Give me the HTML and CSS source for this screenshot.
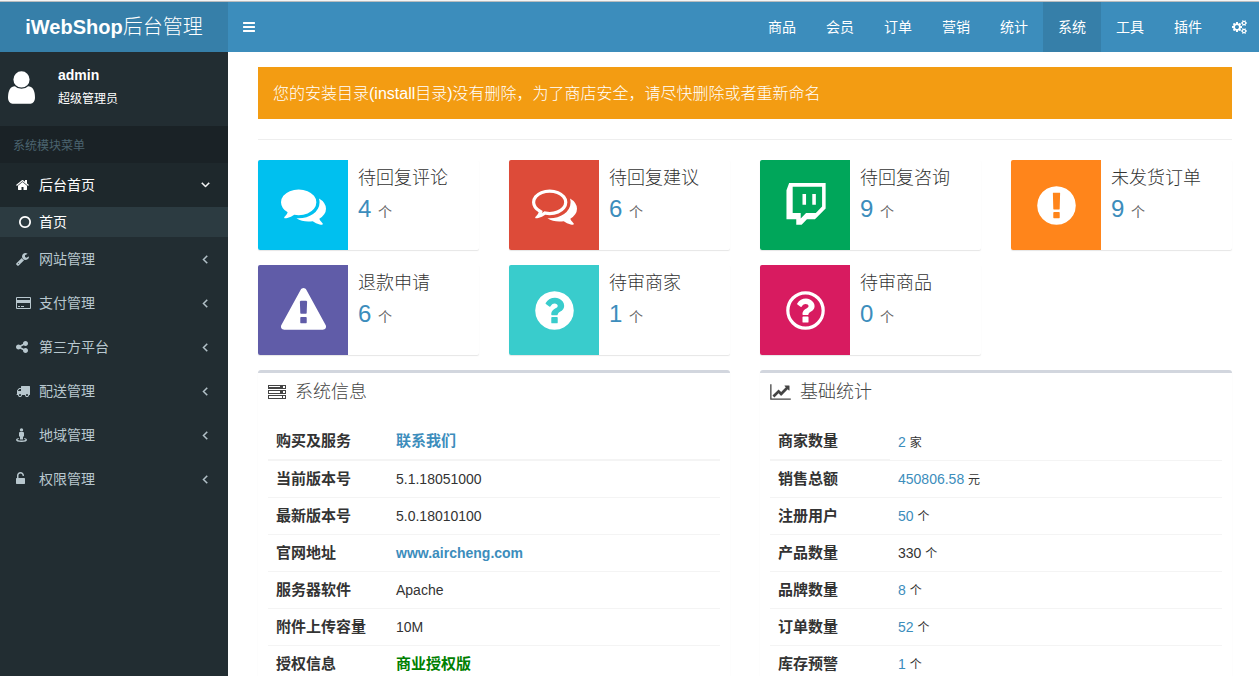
FILE: index.html
```html
<!DOCTYPE html>
<html lang="zh-CN">
<head>
<meta charset="utf-8">
<title>iWebShop后台管理</title>
<link rel="stylesheet" href="styles.css">
</head>
<body>
<svg class="sprite" aria-hidden="true">
  <symbol id="bars" viewBox="0 0 1792 1792"><path d="M1664 1344v128q0 26-19 45t-45 19h-1408q-26 0-45-19t-19-45v-128q0-26 19-45t45-19h1408q26 0 45 19t19 45zm0-512v128q0 26-19 45t-45 19h-1408q-26 0-45-19t-19-45v-128q0-26 19-45t45-19h1408q26 0 45 19t19 45zm0-512v128q0 26-19 45t-45 19h-1408q-26 0-45-19t-19-45v-128q0-26 19-45t45-19h1408q26 0 45 19t19 45z"/></symbol>
  <symbol id="user" viewBox="256 128 1280 1536"><path d="M1536 1399q0 109-62.5 187t-150.5 78h-854q-88 0-150.5-78t-62.5-187q0-85 8.5-160.5t31.5-152 58.5-131 94-89 134.5-34.5q131 128 313 128t313-128q76 0 134.5 34.5t94 89 58.5 131 31.5 152 8.5 160.5zm-256-887q0 159-112.5 271.5t-271.5 112.5-271.5-112.5-112.5-271.5 112.5-271.5 271.5-112.5 271.5 112.5 112.5 271.5z"/></symbol>
  <symbol id="home" viewBox="64 0 1792 1792"><path d="M1472 992v480q0 26-19 45t-45 19h-384v-384h-256v384h-384q-26 0-45-19t-19-45v-480q0-1 .5-3t.5-3l575-474 575 474q1 2 1 6zm223-69l-62 74q-8 9-21 11h-3q-13 0-21-7l-692-577-692 577q-12 8-24 7-13-2-21-11l-62-74q-8-10-7-23.5t11-21.5l719-599q32-26 76-26t76 26l244 204v-195q0-14 9-23t23-9h192q14 0 23 9t9 23v408l219 182q10 8 11 21.5t-7 23.5z"/></symbol>
  <symbol id="ring" viewBox="0 0 1792 1792"><path d="M896 352q-148 0-273 73t-198 198-73 273 73 273 198 198 273 73 273-73 198-198 73-273-73-273-198-198-273-73zm768 544q0 209-103 385.5t-279.5 279.5-385.5 103-385.5-103-279.5-279.5-103-385.5 103-385.5 279.5-279.5 385.5-103 385.5 103 279.5 279.5 103 385.5z"/></symbol>
  <symbol id="wrench" viewBox="64 0 1792 1792"><path d="M448 1472q0-26-19-45t-45-19-45 19-19 45 19 45 45 19 45-19 19-45zm644-420l-682 682q-37 37-90 37-52 0-91-37l-106-108q-38-36-38-90 0-53 38-91l681-681q39 98 114.5 173.5t173.5 114.5zm634-435q0 39-23 106-47 134-164.5 217.5t-258.5 83.5q-185 0-316.5-131.5t-131.5-316.5 131.5-316.5 316.5-131.5q58 0 121.5 16.5t107.5 46.5q16 11 16 28t-16 28l-293 169v224l193 107q5-3 79-48.5t135.5-81 70.5-35.5q15 0 23.5 10t8.5 25z"/></symbol>
  <symbol id="card" viewBox="0 0 15 14"><path fill-rule="evenodd" d="M1 1h13q1 0 1 1v10q0 1-1 1h-13q-1 0-1-1v-10q0-1 1-1zM1 2v2h13v-2zM1 7v5h13v-5zM2 10h2v1h-2zM5 10h3v1h-3z"/></symbol>
  <symbol id="share" viewBox="128 0 1792 1792"><path d="M1344 1024q133 0 226.5 93.5t93.5 226.5-93.5 226.5-226.5 93.5-226.5-93.5-93.5-226.5q0-12 2-34l-360-180q-92 86-218 86-133 0-226.5-93.5t-93.5-226.5 93.5-226.5 226.5-93.5q126 0 218 86l360-180q-2-22-2-34 0-133 93.5-226.5t226.5-93.5 226.5 93.5 93.5 226.5-93.5 226.5-226.5 93.5q-126 0-218-86l-360 180q2 22 2 34t-2 34l360 180q92-86 218-86z"/></symbol>
  <symbol id="truck" viewBox="0 0 1792 1792"><path d="M640 1408q0-52-38-90t-90-38-90 38-38 90 38 90 90 38 90-38 38-90zm-384-512h384v-256h-158q-13 0-22 9l-195 195q-9 9-9 22v30zm1280 512q0-52-38-90t-90-38-90 38-38 90 38 90 90 38 90-38 38-90zm256-1088v1024q0 15-4 26.5t-13.5 18.5-16.5 11.5-23.5 6-22.5 2-25.5 0-22.5-.5q0 106-75 181t-181 75-181-75-75-181h-384q0 106-75 181t-181 75-181-75-75-181h-64q-3 0-22.5.5t-25.5 0-22.5-2-23.5-6-16.5-11.5-13.5-18.5-4-26.5q0-26 19-45t45-19v-320q0-8-.5-35t0-38 2.5-34.5 6.5-37 14-30.5 22.5-30l198-198q19-19 50.5-32t58.5-13h160v-192q0-26 19-45t45-19h1024q26 0 45 19t19 45z"/></symbol>
  <symbol id="street" viewBox="0 0 14 14"><circle cx="5.5" cy="1.9" r="1.7"/><path d="M3 5q0-1 1-1h3q1 0 1 1v3.500h-1v3h-3v-3h-1zM2.600 10l.3 1q-1.400.3-1.400.7 0 .8 4 .8t4-.8q0-.4-1.400-.7l.3-1q2.600.5 2.600 1.700 0 2.200-5.500 2.200t-5.500-2.200q0-1.200 2.600-1.700z"/></symbol>
  <symbol id="unlock" viewBox="320 0 1792 1792"><path d="M1376 768q40 0 68 28t28 68v576q0 40-28 68t-68 28h-960q-40 0-68-28t-28-68v-576q0-40 28-68t68-28h32v-320q0-185 131.500-316.500t316.500-131.500 316.500 131.500 131.500 316.500q0 26-19 45t-45 19h-64q-26 0-45-19t-19-45q0-106-75-181t-181-75-181 75-75 181v320h736z"/></symbol>
  <symbol id="angle" viewBox="0 0 1792 1792"><path stroke="currentColor" stroke-width="60" d="M1203 544q0 13-10 23l-393 393 393 393q10 10 10 23t-10 23l-50 50q-10 10-23 10t-23-10l-466-466q-10-10-10-23t10-23l466-466q10-10 23-10t23 10l50 50q10 10 10 23z"/></symbol>
  <symbol id="cogs" viewBox="-64 0 1920 1792"><path d="M832 896q0-106-75-181t-181-75-181 75-75 181 75 181 181 75 181-75 75-181zm768 512q0-52-38-90t-90-38-90 38-38 90q0 53 37.500 90.500t90.500 37.500 90.500-37.500 37.500-90.500zm0-1024q0-52-38-90t-90-38-90 38-38 90q0 53 37.500 90.500t90.500 37.500 90.500-37.500 37.500-90.500zm-384 421v185q0 10-7 19.500t-16 10.500l-155 24q-11 35-32 76 34 48 90 115 7 11 7 20 0 12-7 19-23 30-82.500 89.500t-78.500 59.500q-11 0-21-7l-115-90q-37 19-77 31-11 108-23 155-7 24-30 24h-186q-11 0-20-7.500t-10-17.500l-23-153q-34-10-75-31l-118 89q-7 7-20 7-11 0-21-8-144-133-144-160 0-9 7-19 10-14 41-53t47-61q-23-44-35-82l-152-24q-10-1-17-9.500t-7-19.500v-185q0-10 7-19.500t16-10.500l155-24q11-35 32-76-34-48-90-115-7-11-7-20 0-12 7-20 22-30 82-89t79-59q11 0 21 7l115 90q34-18 77-32 11-108 23-154 7-24 30-24h186q11 0 20 7.500t10 17.500l23 153q34 10 75 31l118-89q8-7 20-7 11 0 21 8 144 133 144 160 0 8-7 19-12 16-42 54t-45 60q23 48 34 82l152 23q10 2 17 10.500t7 19.500zm640 533v140q0 16-149 31-12 27-30 52 51 113 51 138 0 4-4 7-122 71-124 71-8 0-46-47t-52-68q-20 2-30 2t-30-2q-14 21-52 68t-46 47q-2 0-124-71-4-3-4-7 0-25 51-138-18-25-30-52-149-15-149-31v-140q0-16 149-31 13-29 30-52-51-113-51-138 0-4 4-7 4-2 35-20t59-34 30-16q8 0 46 46.500t52 67.500q20-2 30-2t30 2q51-71 92-112l6-2q4 0 124 70 4 3 4 7 0 25-51 138 17 23 30 52 149 15 149 31zm0-1024v140q0 16-149 31-12 27-30 52 51 113 51 138 0 4-4 7-122 71-124 71-8 0-46-47t-52-68q-20 2-30 2t-30-2q-14 21-52 68t-46 47q-2 0-124-71-4-3-4-7 0-25 51-138-18-25-30-52-149-15-149-31v-140q0-16 149-31 13-29 30-52-51-113-51-138 0-4 4-7 4-2 35-20t59-34 30-16q8 0 46 46.500t52 67.500q20-2 30-2t30 2q51-71 92-112l6-2q4 0 124 70 4 3 4 7 0 25-51 138 17 23 30 52 149 15 149 31z"/></symbol>
  <symbol id="comments" viewBox="0 0 1792 1792"><path d="M1408 768q0 139-94 257t-256.500 186.500-353.500 68.500q-86 0-176-16-124 88-278 128-36 9-86 16h-3q-11 0-20.500-8t-11.500-21q-1-3-1-6.500t.5-6.500 2-6l2.500-5 3.500-5.500 4-5 4.500-5 4-4.500q5-6 23-25t26-29.500 22.500-29 25-38.500 20.500-44q-124-72-195-177t-71-224q0-139 94-257t256.500-186.500 353.500-68.500 353.500 68.500 256.500 186.500 94 257zm384 256q0 120-71 224.500t-195 176.500q10 24 20.500 44t25 38.500 22.500 29 26 29.500 23 25q1 1 4 4.500t4.500 5 4 5 3.500 5.500l2.500 5 2 6 .5 6.500-1 6.500q-3 14-13 22t-22 7q-50-7-86-16-154-40-278-128-90 16-176 16-271 0-472-132 58 4 88 4 161 0 309-45t264-129q125-92 192-212t67-254q0-77-23-152 129 71 204 178t75 230z"/></symbol>
  <symbol id="comments-o" viewBox="0 0 1792 1792"><path fill-rule="evenodd" d="M704 384q-153 0-286 52t-211.500 141-78.500 191q0 82 53 158t149 132l97 56-35 84q34-20 62-39l44-31 53 10q78 14 153 14 153 0 286-52t211.500-141 78.500-191-78.500-191-211.500-141-286-52zM1408 768q0 139-94 257t-256.500 186.500-353.500 68.500q-86 0-176-16-124 88-278 128-36 9-86 16h-3q-11 0-20.500-8t-11.500-21q-1-3-1-6.500t.5-6.500 2-6l2.500-5 3.500-5.500 4-5 4.500-5 4-4.500q5-6 23-25t26-29.500 22.500-29 25-38.500 20.500-44q-124-72-195-177t-71-224q0-139 94-257t256.500-186.500 353.500-68.500 353.500 68.500 256.500 186.500 94 257zm384 256q0 120-71 224.500t-195 176.500q10 24 20.500 44t25 38.500 22.500 29 26 29.500 23 25q1 1 4 4.500t4.500 5 4 5 3.500 5.500l2.500 5 2 6 .5 6.500-1 6.500q-3 14-13 22t-22 7q-50-7-86-16-154-40-278-128-90 16-176 16-271 0-472-132 58 4 88 4 161 0 309-45t264-129q125-92 192-212t67-254q0-77-23-152 129 71 204 178t75 230z"/></symbol>
  <symbol id="twitch" viewBox="0 0 1792 1792"><path transform="translate(40 0) scale(.98 1)" d="M896 434v434h-145v-434h145zm398 0v434h-145v-434h145zm0 760l253-254v-795h-1194v1049h326v217l217-217h398zm398-1194v1013l-434 434h-326l-217 217h-217v-217h-398v-1158l109-289h1483z"/></symbol>
  <symbol id="exclaim" viewBox="0 0 1792 1792"><path d="M896 128q209 0 385.500 103t279.500 279.500 103 385.500-103 385.500-279.500 279.500-385.500 103-385.500-103-279.500-279.500-103-385.500 103-385.500 279.500-279.500 385.500-103zm128 1247v-190q0-14-9-23.500t-22-9.500h-192q-13 0-23 10t-10 23v190q0 13 10 23t23 10h192q13 0 22-9.500t9-23.500zm-2-344l18-621q0-12-10-18-10-8-24-8h-220q-14 0-24 8-10 6-10 18l17 621q0 10 10 17.500t24 7.500h185q14 0 23.500-7.500t10.500-17.500z"/></symbol>
  <symbol id="warning" viewBox="0 0 1792 1792"><path d="M1024 1375v-190q0-14-9.500-23.500t-22.500-9.500h-192q-13 0-22.500 9.500t-9.500 23.500v190q0 14 9.500 23.500t22.500 9.500h192q13 0 22.500-9.500t9.500-23.500zm-2-374l18-459q0-12-10-19-13-11-24-11h-220q-11 0-24 11-10 7-10 21l17 457q0 10 10 16.500t24 6.500h185q14 0 23.500-6.500t10.500-16.500zm-14-934l768 1408q35 63-2 126-17 29-46.500 46t-63.500 17h-1536q-34 0-63.500-17t-46.500-46q-37-63-2-126l768-1408q17-31 47-49t65-18 65 18 47 49z"/></symbol>
  <symbol id="question" viewBox="0 0 1792 1792"><path d="M1024 1376v-192q0-14-9-23t-23-9h-192q-14 0-23 9t-9 23v192q0 14 9 23t23 9h192q14 0 23-9t9-23zm256-672q0-88-55.500-163t-138.500-116-170-41q-243 0-371 213-15 24 8 42l132 100q7 6 19 6 16 0 25-12 53-68 86-92 34-24 86-24 48 0 85.500 26t37.500 59q0 38-20 61t-68 45q-63 28-115.500 86.500t-52.500 125.500v36q0 14 9 23t23 9h192q14 0 23-9t9-23q0-19 21.500-49.500t54.500-49.500q32-18 49-28.500t46-35 44.500-48 28-60.500 12.500-81zm384 192q0 209-103 385.500t-279.500 279.500-385.500 103-385.500-103-279.500-279.500-103-385.500 103-385.500 279.500-279.500 385.500-103 385.500 103 279.500 279.500 103 385.500z"/></symbol>
  <symbol id="question-o" viewBox="0 0 1792 1792"><circle cx="896" cy="896" r="704" fill="none" stroke="currentColor" stroke-width="128"/><path transform="translate(54 54) scale(.94)" d="M1024 1376v-192q0-14-9-23t-23-9h-192q-14 0-23 9t-9 23v192q0 14 9 23t23 9h192q14 0 23-9t9-23zm256-672q0-88-55.500-163t-138.500-116-170-41q-243 0-371 213-15 24 8 42l132 100q7 6 19 6 16 0 25-12 53-68 86-92 34-24 86-24 48 0 85.500 26t37.500 59q0 38-20 61t-68 45q-63 28-115.500 86.500t-52.500 125.500v36q0 14 9 23t23 9h192q14 0 23-9t9-23q0-19 21.500-49.500t54.500-49.500q32-18 49-28.500t46-35 44.500-48 28-60.500 12.500-81z"/></symbol>
  <symbol id="server" viewBox="0 0 18 14"><path fill-rule="evenodd" d="M0 0h18v4h-18zM1 1v1h11v-1zM15 1v2h2v-2zM0 5h18v4h-18zM1 6v2h11v-2zM15 6v2h2v-2zM0 10h18v4h-18zM1 11v2h13v-2zM15 11v2h2v-2z"/></symbol>
  <symbol id="chart" viewBox="0 0 2048 1792"><path d="M2048 1536v128h-2048v-1536h128v1408h1920zm-128-1248v435q0 21-19.500 29.500t-35.500-7.500l-121-121-633 633q-10 10-23 10t-23-10l-233-233-416 416-192-192 585-585q10-10 23-10t23 10l233 233 464-464-121-121q-16-16-7.500-35.500t29.500-19.500h435q14 0 23 9t9 23z"/></symbol>
</svg>

<div class="app">
  <header class="topbar">
    <a class="logo" href="#"><b>iWebShop</b>后台管理</a>
    <button class="toggle" type="button" aria-label="切换菜单"><svg class="icon"><use href="#bars"/></svg></button>
    <nav class="topnav">
      <a href="#">商品</a>
      <a href="#">会员</a>
      <a href="#">订单</a>
      <a href="#">营销</a>
      <a href="#">统计</a>
      <a class="current" href="#">系统</a>
      <a href="#">工具</a>
      <a href="#">插件</a>
      <a class="settings" href="#" aria-label="设置"><svg class="icon"><use href="#cogs"/></svg></a>
    </nav>
  </header>

  <div class="columns">
    <aside class="sidebar">
      <div class="user">
        <svg class="avatar"><use href="#user"/></svg>
        <div>
          <p class="user-name">admin</p>
          <p class="user-role">超级管理员</p>
        </div>
      </div>
      <h2 class="menu-title">系统模块菜单</h2>
      <nav class="menu">
        <a class="item active" href="#"><svg class="icon"><use href="#home"/></svg><span>后台首页</span><svg class="arrow down"><use href="#angle"/></svg></a>
        <a class="subitem" href="#"><svg class="icon"><use href="#ring"/></svg><span>首页</span></a>
        <a class="item" href="#"><svg class="icon"><use href="#wrench"/></svg><span>网站管理</span><svg class="arrow"><use href="#angle"/></svg></a>
        <a class="item" href="#"><svg class="icon wide"><use href="#card"/></svg><span>支付管理</span><svg class="arrow"><use href="#angle"/></svg></a>
        <a class="item" href="#"><svg class="icon"><use href="#share"/></svg><span>第三方平台</span><svg class="arrow"><use href="#angle"/></svg></a>
        <a class="item" href="#"><svg class="icon"><use href="#truck"/></svg><span>配送管理</span><svg class="arrow"><use href="#angle"/></svg></a>
        <a class="item" href="#"><svg class="icon"><use href="#street"/></svg><span>地域管理</span><svg class="arrow"><use href="#angle"/></svg></a>
        <a class="item" href="#"><svg class="icon"><use href="#unlock"/></svg><span>权限管理</span><svg class="arrow"><use href="#angle"/></svg></a>
      </nav>
    </aside>

    <main class="content">
      <p class="callout">您的安装目录(install目录)没有删除，为了商店安全，请尽快删除或者重新命名</p>
      <hr class="rule">

      <section class="cards">
        <div class="card"><div class="tile aqua"><svg><use href="#comments"/></svg></div><div class="card-text"><p class="card-title">待回复评论</p><p class="card-count"><a href="#">4</a> <small>个</small></p></div></div>
        <div class="card"><div class="tile red"><svg><use href="#comments-o"/></svg></div><div class="card-text"><p class="card-title">待回复建议</p><p class="card-count"><a href="#">6</a> <small>个</small></p></div></div>
        <div class="card"><div class="tile green"><svg><use href="#twitch"/></svg></div><div class="card-text"><p class="card-title">待回复咨询</p><p class="card-count"><a href="#">9</a> <small>个</small></p></div></div>
        <div class="card"><div class="tile orange"><svg><use href="#exclaim"/></svg></div><div class="card-text"><p class="card-title">未发货订单</p><p class="card-count"><a href="#">9</a> <small>个</small></p></div></div>
        <div class="card"><div class="tile purple"><svg><use href="#warning"/></svg></div><div class="card-text"><p class="card-title">退款申请</p><p class="card-count"><a href="#">6</a> <small>个</small></p></div></div>
        <div class="card"><div class="tile teal"><svg><use href="#question"/></svg></div><div class="card-text"><p class="card-title">待审商家</p><p class="card-count"><a href="#">1</a> <small>个</small></p></div></div>
        <div class="card"><div class="tile maroon"><svg><use href="#question-o"/></svg></div><div class="card-text"><p class="card-title">待审商品</p><p class="card-count"><a href="#">0</a> <small>个</small></p></div></div>
      </section>

      <section class="panels">
        <div class="panel">
          <h3 class="panel-title"><svg class="server"><use href="#server"/></svg>系统信息</h3>
          <table class="info double">
            <tbody>
              <tr><th scope="row">购买及服务</th><td><a class="strong" href="#">联系我们</a></td></tr>
              <tr><th scope="row">当前版本号</th><td>5.1.18051000</td></tr>
              <tr><th scope="row">最新版本号</th><td>5.0.18010100</td></tr>
              <tr><th scope="row">官网地址</th><td><a class="site" href="#">www.aircheng.com</a></td></tr>
              <tr><th scope="row">服务器软件</th><td>Apache</td></tr>
              <tr><th scope="row">附件上传容量</th><td>10M</td></tr>
              <tr><th scope="row">授权信息</th><td><span class="strong licensed">商业授权版</span></td></tr>
            </tbody>
          </table>
        </div>
        <div class="panel">
          <h3 class="panel-title"><svg class="chart"><use href="#chart"/></svg>基础统计</h3>
          <table class="info">
            <tbody>
              <tr><th scope="row">商家数量</th><td><a href="#">2</a> <small>家</small></td></tr>
              <tr><th scope="row">销售总额</th><td><a href="#">450806.58</a> <small>元</small></td></tr>
              <tr><th scope="row">注册用户</th><td><a href="#">50</a> <small>个</small></td></tr>
              <tr><th scope="row">产品数量</th><td>330 <small>个</small></td></tr>
              <tr><th scope="row">品牌数量</th><td><a href="#">8</a> <small>个</small></td></tr>
              <tr><th scope="row">订单数量</th><td><a href="#">52</a> <small>个</small></td></tr>
              <tr><th scope="row">库存预警</th><td><a href="#">1</a> <small>个</small></td></tr>
            </tbody>
          </table>
        </div>
      </section>
    </main>
  </div>
</div>
</body>
</html>
```

FILE: styles.css
```css
* { box-sizing: border-box; }

body {
  margin: 0;
  background: #fff;
  color: #333;
  font: 14px/20px "Liberation Sans", Arial, "Noto Sans CJK SC", sans-serif;
}

p, h2, h3 { margin: 0; font-weight: 400; }
a { color: #3c8dbc; text-decoration: none; }
small { line-height: 1; }
svg { fill: currentColor; flex: none; }
.sprite { display: none; }

.app {
  display: flex;
  flex-direction: column;
  height: 100vh;
  border-top: 1px solid #f4f4f4;
}

/* Top bar */
.topbar {
  display: flex;
  flex: none;
  border-top: 1px solid #b9bcbe;
  background: #3c8dbc;
}
.logo {
  width: 228px;
  background: #367fa9;
  color: #fff;
  font-size: 20px;
  font-weight: 300;
  line-height: 50px;
  text-align: center;
}
.logo b { font-weight: 700; }
.toggle {
  display: flex;
  align-items: center;
  padding: 0 14px;
  border: 0;
  background: none;
  color: #fff;
}
.icon { width: 14px; height: 14px; }
.topnav { display: flex; margin-left: auto; }
.topnav a {
  padding: 0 15px;
  color: #fff;
  line-height: 50px;
}
.topnav .current { background: #367fa9; }
.topnav .settings {
  display: flex;
  align-items: center;
  padding-right: 12px;
}
.settings .icon { width: 15px; }

/* Sidebar */
.columns { display: flex; flex: 1; min-height: 0; }
.sidebar {
  flex: none;
  width: 228px;
  background: #222d32;
}
.user {
  display: flex;
  align-items: center;
  gap: 23px;
  height: 74px;
  padding: 0 8px 4px;
  color: #fff;
}
.avatar { width: 27px; height: 33px; }
.user-name { padding-bottom: 4px; font-weight: 700; }
.user-role { font-size: 12px; }
.menu-title {
  padding: 10px 13px 7px;
  background: #1a2226;
  color: #4b646f;
  font-size: 12px;
}
.item, .subitem {
  display: flex;
  align-items: center;
  color: #b8c7ce;
}
.item { padding: 12px 16px; }
.item span { padding-left: 9px; }
.item .wide { width: 15px; }
.item .wide + span { padding-left: 8px; }
.item.active { background: #1e282c; color: #fff; }
.arrow { width: 14px; height: 14px; margin-left: auto; }
.down { transform: rotate(-90deg); }
.subitem {
  gap: 7px;
  padding: 5px 18px;
  background: #2c3b41;
  color: #fff;
}

/* Content */
.content {
  flex: 1;
  min-width: 0;
  padding: 15px 27px 15px 30px;
  overflow: hidden auto;
  scrollbar-width: none;
}
.callout {
  padding: 16px 15px 14px;
  background: #f39c12;
  color: #fff;
  font-size: 16px;
  font-weight: 300;
  line-height: 22px;
}
.rule {
  margin: 20px 0;
  border: 0;
  border-top: 1px solid #eee;
}
.cards {
  display: grid;
  grid-template-columns: repeat(4, 1fr);
  gap: 15px 30px;
}
.card {
  display: flex;
  overflow: hidden;
  border-radius: 2px;
  box-shadow: 0 1px 1px rgba(0, 0, 0, .1);
}
.tile {
  display: grid;
  flex: none;
  place-items: center;
  width: 90px;
  height: 90px;
  color: #fff;
}
.tile svg { width: 45px; height: 45px; }
.aqua { background: #00c0ef; }
.red { background: #dd4b39; }
.green { background: #00a65a; }
.orange { background: #ff851b; }
.purple { background: #605ca8; }
.teal { background: #39cccc; }
.maroon { background: #d81b60; }
.card-text { padding: 6px 10px; }
.card-title { font-size: 18px; font-weight: 300; line-height: 25px; }
.card-count { font-size: 24px; line-height: 36px; }
.card-count small { color: #666; font-size: 14px; }

/* Panels */
.panels {
  display: grid;
  grid-template-columns: repeat(2, 1fr);
  gap: 30px;
  margin-top: 15px;
}
.panel {
  padding: 0 10px 10px;
  border-top: 3px solid #d2d6de;
  border-radius: 3px;
  box-shadow: 0 1px 1px rgba(0, 0, 0, .1);
}
.panel-title {
  display: flex;
  align-items: center;
  gap: 9px;
  padding-bottom: 12px;
  color: #444;
  font-size: 18px;
  font-weight: 300;
  line-height: 38px;
}
.server { width: 18px; height: 14px; }
.chart { width: 21px; height: 18px; }
.info { width: 100%; border-spacing: 0; }
.info th, .info td {
  padding: 8px;
  border-bottom: 1px solid #f4f4f4;
  text-align: left;
}
.info th { width: 120px; font-size: 15px; font-weight: 700; }
.info tr:first-child th, .double tr:first-child td { border-bottom-width: 2px; }
.info small { font-size: 12px; }
.strong { font-size: 15px; font-weight: 700; }
.site { font-weight: 700; }
.licensed { color: #008000; }
```
